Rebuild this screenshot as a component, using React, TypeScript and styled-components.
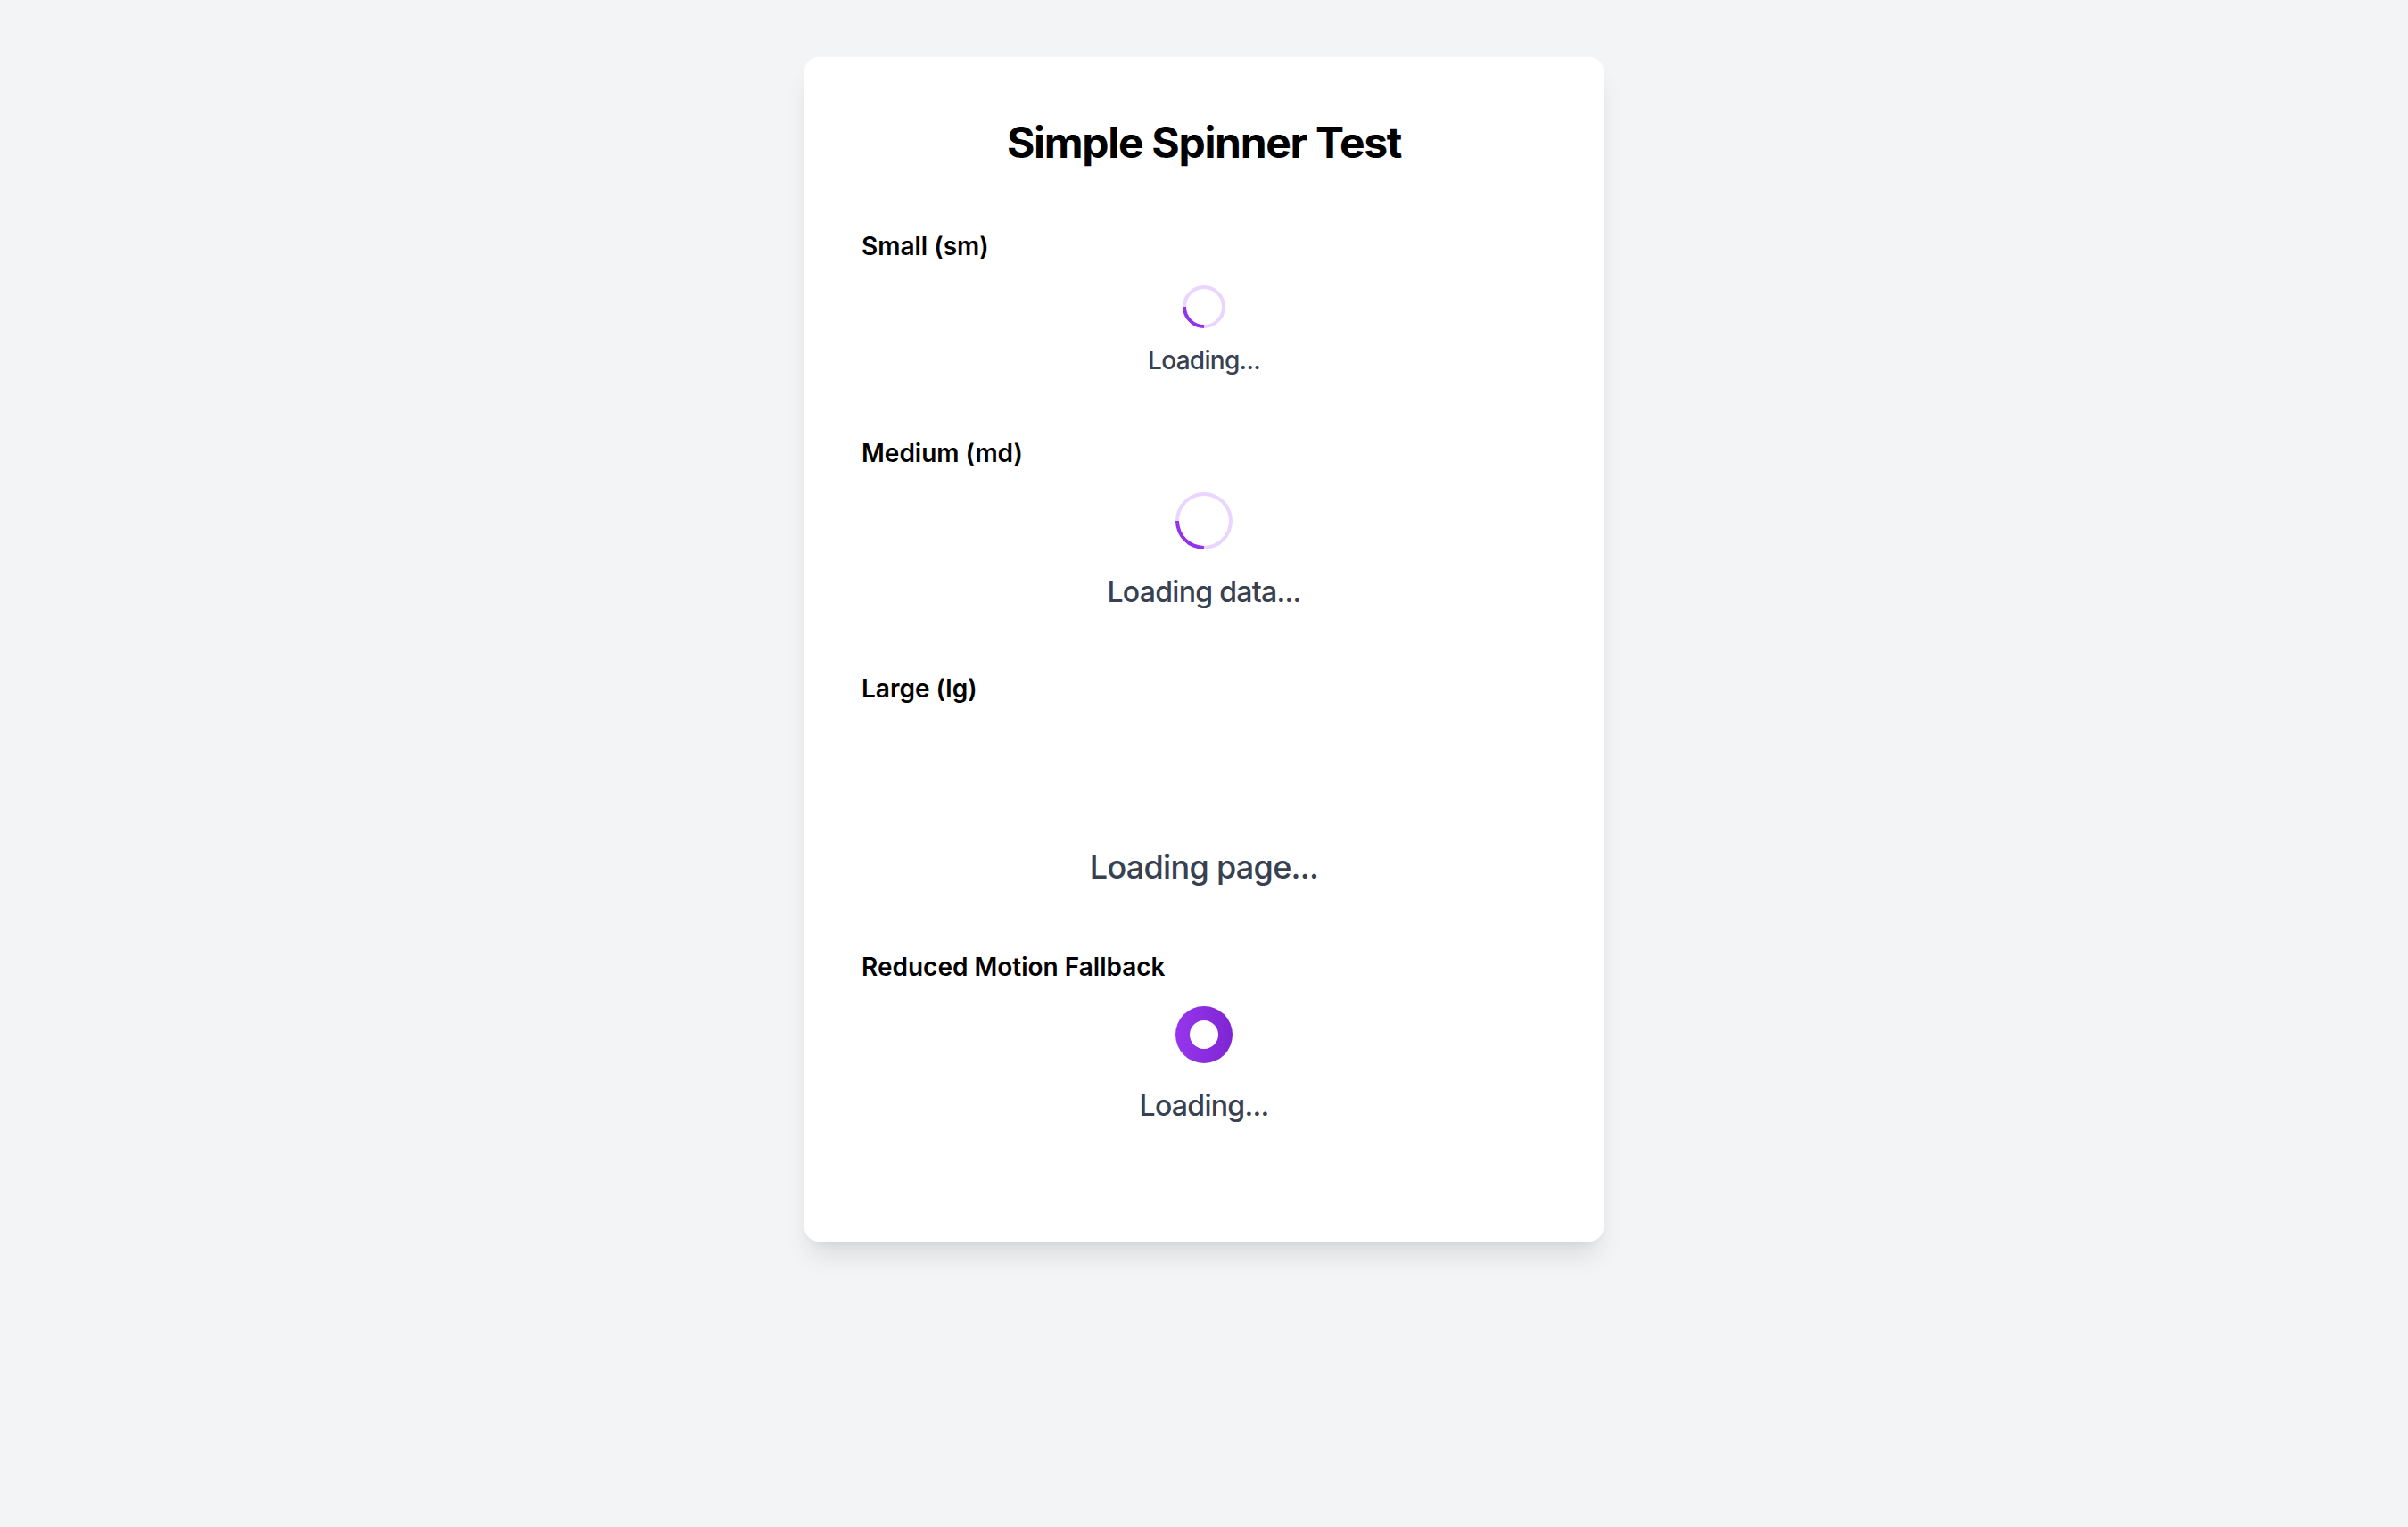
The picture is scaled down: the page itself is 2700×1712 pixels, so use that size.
import styled, { createGlobalStyle, css } from "styled-components";

type Size = "sm" | "md" | "lg";

const GlobalStyle = createGlobalStyle`
    html, body {
        margin: 0;
        padding: 0;
        background: #f3f4f6;
        font-family: Inter, "Noto Sans", "Liberation Sans", sans-serif;
    }
    * {
        box-sizing: border-box;
    }
`;

const Page = styled.div`
    min-height: 100vh;
    padding: 64px 16px;
    background: #f3f4f6;
`;

const Card = styled.div`
    width: 896px;
    margin: 0 auto;
    padding: 64px 64px 128px;
    background: #ffffff;
    border-radius: 16px;
    box-shadow: 0 20px 30px -6px rgba(0, 0, 0, 0.1), 0 8px 12px -8px rgba(0, 0, 0, 0.1);
`;

const Title = styled.h1`
    margin: 0 0 64px;
    font-size: 48px;
    line-height: 64px;
    font-weight: 700;
    color: #000000;
    text-align: center;
    letter-spacing: -1.3px;
`;

const Sections = styled.div`
    display: flex;
    flex-direction: column;
    gap: 64px;
`;

const Section = styled.section`
    display: flex;
    flex-direction: column;
`;

const Label = styled.h2`
    margin: 0 0 24px;
    font-size: 28px;
    line-height: 40px;
    font-weight: 600;
    color: #000000;
`;

const gaps: Record<Size, number> = { sm: 16, md: 24, lg: 32 };
const dims: Record<Size, number> = { sm: 48, md: 64, lg: 96 };
const fonts: Record<Size, [number, number]> = { sm: [28, 40], md: [32, 48], lg: [36, 56] };

const Loader = styled.div<{ $size: Size }>`
    display: flex;
    flex-direction: column;
    align-items: center;
    gap: ${(p) => gaps[p.$size]}px;
`;

const Ring = styled.div<{ $size: Size; $hidden?: boolean }>`
    width: ${(p) => dims[p.$size]}px;
    height: ${(p) => dims[p.$size]}px;
    border-radius: 50%;
    ${(p) =>
        p.$hidden
            ? css`
                  border: 4px solid transparent;
              `
            : css`
                  border: 4px solid #e9d5ff;
                  border-top-color: #9333ea;
                  transform: rotate(225deg);
              `}
`;

const StaticRing = styled.div`
    width: 64px;
    height: 64px;
    border-radius: 50%;
    background: linear-gradient(90deg, #9636ec, #7e26d3);
    display: flex;
    align-items: center;
    justify-content: center;
`;

const Dot = styled.div`
    width: 32px;
    height: 32px;
    border-radius: 50%;
    background: #ffffff;
`;

const Message = styled.p<{ $size: Size }>`
    margin: 0;
    font-size: ${(p) => fonts[p.$size][0]}px;
    line-height: ${(p) => fonts[p.$size][1]}px;
    font-weight: 500;
    letter-spacing: -0.7px;
    color: #374151;
`;

function Spinner({ size, text, hidden }: { size: Size; text: string; hidden?: boolean }) {
    return (
        <Loader $size={size}>
            <Ring $size={size} $hidden={hidden} />
            <Message $size={size}>{text}</Message>
        </Loader>
    );
}

export default function App() {
    return (
        <Page>
            <GlobalStyle />
            <Card>
                <Title>Simple Spinner Test</Title>
                <Sections>
                    <Section>
                        <Label>Small (sm)</Label>
                        <Spinner size="sm" text="Loading..." />
                    </Section>
                    <Section>
                        <Label>Medium (md)</Label>
                        <Spinner size="md" text="Loading data..." />
                    </Section>
                    <Section>
                        <Label>Large (lg)</Label>
                        <Spinner size="lg" text="Loading page..." hidden />
                    </Section>
                    <Section>
                        <Label>Reduced Motion Fallback</Label>
                        <Loader $size="md">
                            <StaticRing>
                                <Dot />
                            </StaticRing>
                            <Message $size="md">Loading...</Message>
                        </Loader>
                    </Section>
                </Sections>
            </Card>
        </Page>
    );
}
